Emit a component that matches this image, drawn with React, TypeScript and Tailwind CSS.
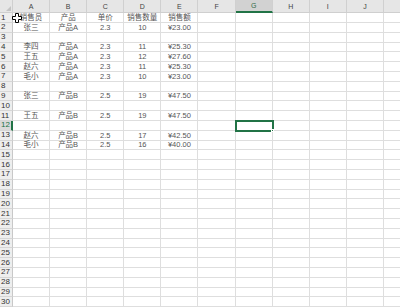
import React from 'react';

const COLS = ['A', 'B', 'C', 'D', 'E', 'F', 'G', 'H', 'I', 'J', 'K'];

const DATA: Record<number, string[]> = {
  1: ['销售员', '产品', '单价', '销售数量', '销售额'],
  2: ['张三', '产品A', '2.3', '10', '¥23.00'],
  4: ['李四', '产品A', '2.3', '11', '¥25.30'],
  5: ['王五', '产品A', '2.3', '12', '¥27.60'],
  6: ['赵六', '产品A', '2.3', '11', '¥25.30'],
  7: ['毛小', '产品A', '2.3', '10', '¥23.00'],
  9: ['张三', '产品B', '2.5', '19', '¥47.50'],
  11: ['王五', '产品B', '2.5', '19', '¥47.50'],
  13: ['赵六', '产品B', '2.5', '17', '¥42.50'],
  14: ['毛小', '产品B', '2.5', '16', '¥40.00'],
};

const ROWS = Array.from({ length: 30 }, (_, i) => i + 1);

export default function App() {
  return (
    <div
      className="relative w-[400px] h-[308px] overflow-hidden bg-white"
      style={{ fontFamily: '"Liberation Sans", "Noto Sans CJK SC", sans-serif' }}
    >
      <div className="grid grid-cols-[13px_repeat(11,37.1px)] grid-rows-[13.3px_repeat(30,9.8px)]">
        {/* Corner */}
        <div className="relative bg-[#e6e6e6] border-r border-b border-[#cfcfcf]">
          <div className="absolute right-[1px] bottom-[1px] w-0 h-0 border-l-[5px] border-l-transparent border-b-[5px] border-b-[#c4c4c4]" />
        </div>

        {/* Column headers */}
        {COLS.map(c => (
          <div
            key={c}
            className={[
              'flex items-center justify-center text-[7px] leading-none border-r border-[#d0d0d0]',
              c === 'G'
                ? 'bg-[#d2d2d2] text-[#2f6b48] border-b-2 border-b-[#217346]'
                : 'bg-[#e6e6e6] text-[#444] border-b border-b-[#cfcfcf]',
            ].join(' ')}
          >
            {c === 'K' ? '' : c}
          </div>
        ))}

        {/* Rows */}
        {ROWS.map(r => (
          <React.Fragment key={r}>
            <div
              className={[
                'flex items-center pl-[1px] text-[8px] leading-none border-b border-[#d6d6d6]',
                r === 12
                  ? 'bg-[#d9d9d9] text-[#217346] border-r-2 border-r-[#217346]'
                  : 'bg-[#eeeeee] text-[#333] border-r border-r-[#c8c8c8]',
              ].join(' ')}
            >
              {r}
            </div>
            {COLS.map((c, ci) => {
              const v = DATA[r]?.[ci];
              const selected = r === 12 && c === 'G';
              return (
                <div
                  key={c}
                  className={[
                    'relative flex items-center justify-center text-[7.5px] leading-none text-[#555] border-r border-b border-[#dedede]',
                    selected ? 'outline-2 outline-[#217346] -outline-offset-1 z-10' : '',
                  ].join(' ')}
                >
                  {v}
                  {selected && (
                    <div className="absolute -right-[2px] -bottom-[2px] w-[3px] h-[3px] bg-[#217346] border border-white" />
                  )}
                </div>
              );
            })}
          </React.Fragment>
        ))}
      </div>

      {/* Fat cross cursor */}
      <svg className="absolute left-[12px] top-[13px]" width="10" height="10" viewBox="0 0 10 10">
        <path
          d="M3.5 0.5h3v3h3v3h-3v3h-3v-3h-3v-3h3z"
          fill="#fff"
          stroke="#000"
          strokeWidth="1"
        />
      </svg>
    </div>
  );
}
